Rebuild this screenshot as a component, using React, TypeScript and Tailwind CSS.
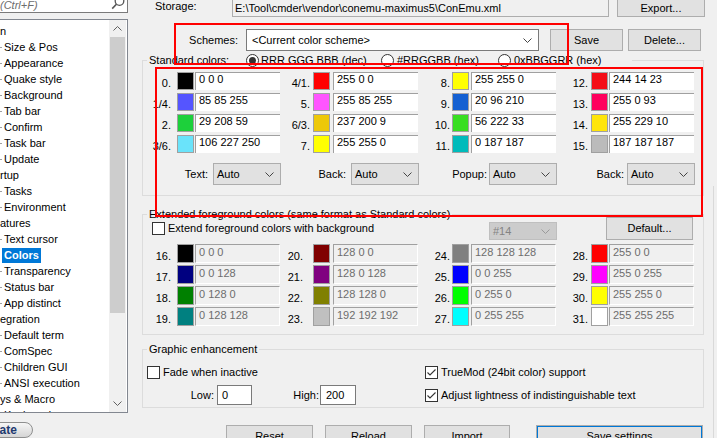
import React from "react";

type Cell = [string, string];

// [label, "r g b"]
const standard: Cell[][] = [
  [["0.", "0 0 0"], ["4/1.", "255 0 0"], ["8.", "255 255 0"], ["12.", "244 14 23"]],
  [["1/4.", "85 85 255"], ["5.", "255 85 255"], ["9.", "20 96 210"], ["13.", "255 0 93"]],
  [["2.", "29 208 59"], ["6/3.", "237 200 9"], ["10.", "56 222 33"], ["14.", "255 229 10"]],
  [["3/6.", "106 227 250"], ["7.", "255 255 0"], ["11.", "0 187 187"], ["15.", "187 187 187"]],
];

const extended: Cell[][] = [
  [["16.", "0 0 0"], ["20.", "128 0 0"], ["24.", "128 128 128"], ["28.", "255 0 0"]],
  [["17.", "0 0 128"], ["21.", "128 0 128"], ["25.", "0 0 255"], ["29.", "255 0 255"]],
  [["18.", "0 128 0"], ["22.", "128 128 0"], ["26.", "0 255 0"], ["30.", "255 255 0"]],
  [["19.", "0 128 128"], ["23.", "192 192 192"], ["27.", "0 255 255"], ["31.", "255 255 255"]],
];

const cols = [
  { label: "w-[28px]", sw: "ml-[6px]", inp: "ml-[1px]" },
  { label: "w-[30px]", sw: "ml-[3px]", inp: "ml-[3px]" },
  { label: "w-[32px]", sw: "ml-[2px]", inp: "ml-[2px]" },
  { label: "w-[32px]", sw: "ml-[3px]", inp: "ml-[1px]" },
];

// visible parts of the settings tree (it is scrolled to the right a bit)
const tree: { text: string; child?: boolean; selected?: boolean }[] = [
  { text: "n" },
  { text: "Size & Pos", child: true },
  { text: "Appearance", child: true },
  { text: "Quake style", child: true },
  { text: "Background", child: true },
  { text: "Tab bar", child: true },
  { text: "Confirm", child: true },
  { text: "Task bar", child: true },
  { text: "Update", child: true },
  { text: "rtup" },
  { text: "Tasks", child: true },
  { text: "Environment", child: true },
  { text: "atures" },
  { text: "Text cursor", child: true },
  { text: "Colors", child: true, selected: true },
  { text: "Transparency", child: true },
  { text: "Status bar", child: true },
  { text: "App distinct", child: true },
  { text: "egration" },
  { text: "Default term", child: true },
  { text: "ComSpec", child: true },
  { text: "Children GUI", child: true },
  { text: "ANSI execution", child: true },
  { text: "ys & Macro" },
  { text: "Keyboard", child: true },
];

function Chevron({ up = false, color = "#444" }: { up?: boolean; color?: string }) {
  return (
    <svg width="9" height="5" viewBox="0 0 9 5">
      <path d={up ? "M0.5 4.5L4.5 0.5L8.5 4.5" : "M0.5 0.5L4.5 4.5L8.5 0.5"} fill="none" stroke={color} strokeWidth="1" />
    </svg>
  );
}

function Button({ className = "", children }: { className?: string; children: React.ReactNode }) {
  return (
    <div className={`flex h-full items-center justify-center border border-[#adadad] bg-[#e1e1e1] ${className}`}>
      {children}
    </div>
  );
}

function Combo({ className = "", text }: { className?: string; text: string }) {
  return (
    <div className={`flex h-[22px] w-[68px] items-center border border-[#adadad] bg-[#e1e1e1] pl-[3px] pt-px ${className}`}>
      <span>{text}</span>
      <span className="ml-auto mr-[6px] flex">
        <Chevron />
      </span>
    </div>
  );
}

function Checkbox({ checked = false }: { checked?: boolean }) {
  return (
    <div className="flex h-[13px] w-[13px] shrink-0 items-center justify-center border border-[#333] bg-white">
      {checked && (
        <svg width="11" height="11" viewBox="0 0 11 11">
          <path d="M1.5 5.5L4 8L9.5 2.5" fill="none" stroke="#333" strokeWidth="1.1" />
        </svg>
      )}
    </div>
  );
}

function Radio({ checked = false }: { checked?: boolean }) {
  return (
    <div className="flex h-[13px] w-[13px] shrink-0 items-center justify-center rounded-full border border-[#333] bg-white">
      {checked && <div className="h-[7px] w-[7px] rounded-full bg-[#333]" />}
    </div>
  );
}

function ColorRow({ cells, disabled }: { cells: Cell[]; disabled?: boolean }) {
  return (
    <div className={`flex ${disabled ? "h-[19px]" : "h-[18px]"}`}>
      {cells.map(([label, rgb], i) => (
        <React.Fragment key={label}>
          <div
            className={`${cols[i].label} h-full text-right ${disabled ? "pt-[6px]" : "pt-[5px]"} ${
              disabled && i === 1 ? "pr-[7px]" : ""
            }`}
          >
            {label}
          </div>
          <div
            className={`${cols[i].sw} h-full w-[17px] border border-[#a0a0a0]`}
            style={{ backgroundColor: `rgb(${rgb.split(" ").join(",")})` }}
          />
          <div
            className={`${cols[i].inp} h-full w-[85px] border-t border-l border-[#a0a0a0] pl-[3px] ${
              disabled ? "border-r border-b border-r-white border-b-white bg-[#f0f0f0] leading-[15px] text-[#6d6d6d]" : "bg-white"
            }`}
          >
            {rgb}
          </div>
        </React.Fragment>
      ))}
    </div>
  );
}

export default function App() {
  return (
    <div className="relative flex h-[438px] w-[717px] overflow-hidden bg-[#f0f0f0] font-['Liberation_Sans',Arial,sans-serif] text-[11px] leading-[13px] text-black">
      {/* left: search + tree */}
      <div className="flex w-[128px] shrink-0 flex-col">
        <div className="flex h-[16px] items-start border-r border-b border-[#7a7a7a] bg-white">
          <span className="mt-[-1px] italic text-[#6d6d6d]">(Ctrl+F)</span>
          <svg className="ml-auto mr-[2px] mt-[-5px]" width="14" height="17" viewBox="0 0 14 17">
            <circle cx="8.5" cy="6" r="4.3" fill="none" stroke="#555" strokeWidth="1.3" />
            <path d="M5.4 9.2L1.2 13.6" stroke="#555" strokeWidth="1.6" />
          </svg>
        </div>
        <div className="mt-[6px] flex h-[394px] border-t border-r border-b border-[#828790] bg-white">
          <div className="flex-1 overflow-hidden pt-[3px]">
            {tree.map((t) => (
              <div key={t.text} className="flex h-[16px] items-center whitespace-nowrap">
                {t.child && !t.selected && <span className="mr-[2px] h-px w-[2px] bg-[#a0a0a0]" />}
                {t.selected ? (
                  <span className="ml-[2px] bg-[#0078d7] px-[2px] py-px font-bold text-white">{t.text}</span>
                ) : (
                  <span>{t.text}</span>
                )}
              </div>
            ))}
          </div>
          <div className="mr-px flex w-[17px] flex-col bg-[#f0f0f0]">
            <div className="flex h-[17px] items-center justify-center">
              <Chevron up color="#606060" />
            </div>
            <div className="flex-1 px-px">
              <div className="h-[276px] bg-[#cdcdcd]" />
            </div>
            <div className="flex h-[17px] items-center justify-center">
              <Chevron color="#606060" />
            </div>
          </div>
        </div>
        <div className="ml-[-40px] mt-[9px] flex h-[22px] w-[73px] items-center justify-center rounded-[11px] border border-[#8e8f8f] bg-linear-to-b from-[#f6f6f6] to-[#d5d5d5] text-[12px] font-bold text-[#1e3a70]">
          Donate
        </div>
      </div>

      {/* right: colors page */}
      <div className="flex flex-1 flex-col">
        <div className="mt-[-4px] flex h-[21px] shrink-0 items-center">
          <div className="ml-[27px] w-[77px]">Storage:</div>
          <div className="flex h-full w-[377px] items-center border border-[#adadad] pl-[2px] pt-[3px]">
            E:\Tool\cmder\vendor\conemu-maximus5\ConEmu.xml
          </div>
          <Button className="ml-[8px] w-[88px] pt-[3px]">Export...</Button>
        </div>

        <div className="mt-[12px] flex h-[22px] shrink-0 items-center">
          <div className="w-[110px] text-right">Schemes:</div>
          <div className="ml-[8px] flex h-full w-[293px] items-center border border-[#7a7a7a] bg-white pl-[5px]">
            <span>{"<Current color scheme>"}</span>
            <span className="ml-auto mr-[6px] flex">
              <Chevron />
            </span>
          </div>
          <Button className="ml-[11px] w-[73px]">Save</Button>
          <Button className="ml-[5px] w-[73px]">Delete...</Button>
        </div>

        <fieldset className="ml-[14px] mt-[1px] w-[562px] shrink-0 border border-[#dcdcdc] pb-[10px] pt-[4px]">
          <legend className="ml-[4px] px-[2px]">
            <div className="flex h-[16px] items-center">
              <span className="w-[97px]">Standard colors:</span>
              <span className="flex w-[135px] items-center">
                <Radio checked />
                <span className="ml-[2px]">RRR GGG BBB (dec)</span>
              </span>
              <span className="flex w-[117px] items-center">
                <Radio />
                <span className="ml-[3px]">#RRGGBB (hex)</span>
              </span>
              <span className="flex w-[132px] items-center">
                <Radio />
                <span className="ml-[3px]">0xBBGGRR (hex)</span>
              </span>
            </div>
          </legend>
          <div className="flex flex-col gap-[3px]">
            {standard.map((row, i) => (
              <ColorRow key={i} cells={row} />
            ))}
          </div>
          <div className="mt-[10px] flex h-[22px] items-center">
            <div className="w-[65px] text-right">Text:</div>
            <Combo className="ml-[5px]" text="Auto" />
            <div className="w-[65px] text-right">Back:</div>
            <Combo className="ml-[5px]" text="Auto" />
            <div className="w-[68px] text-right">Popup:</div>
            <Combo className="ml-[2px]" text="Auto" />
            <div className="w-[67px] text-right">Back:</div>
            <Combo className="ml-[3px]" text="Auto" />
          </div>
        </fieldset>

        <fieldset className="ml-[14px] mt-[10px] w-[562px] shrink-0 border border-[#dcdcdc] pb-[8px]">
          <legend className="ml-[4px] px-[2px] leading-[16px]">
            Extended foreground colors (same format as Standard colors)
          </legend>
          <div className="mt-[-5px] flex h-[23px] items-center">
            <div className="flex w-[346px] items-center">
              <span className="ml-[9px]">
                <Checkbox />
              </span>
              <span className="ml-[3px]">Extend foreground colors with background</span>
            </div>
            <div className="flex h-[18px] w-[68px] items-center self-end border border-[#bfbfbf] bg-[#cccccc] pl-[3px] text-[#838383]">
              <span>#14</span>
              <span className="ml-auto mr-[6px] flex">
                <Chevron color="#9a9a9a" />
              </span>
            </div>
            <Button className="ml-[49px] w-[87px]">Default...</Button>
          </div>
          <div className="mt-[4px] flex flex-col gap-[2px]">
            {extended.map((row, i) => (
              <ColorRow key={i} cells={row} disabled />
            ))}
          </div>
        </fieldset>

        <fieldset className="ml-[14px] mt-[6px] w-[562px] shrink-0 border border-[#dcdcdc] pb-[2px] pt-[7px]">
          <legend className="ml-[4px] px-[2px] leading-[16px]">Graphic enhancement</legend>
          <div className="flex h-[16px] items-center">
            <div className="flex w-[282px] items-center">
              <span className="ml-[4px]">
                <Checkbox />
              </span>
              <span className="ml-[3px]">Fade when inactive</span>
            </div>
            <Checkbox checked />
            <span className="ml-[3px]">TrueMod (24bit color) support</span>
          </div>
          <div className="mt-[5px] flex h-[20px] items-center">
            <div className="flex h-full w-[282px] items-center">
              <div className="w-[71px] text-right">Low:</div>
              <div className="ml-[3px] flex h-full w-[35px] items-center border border-[#7a7a7a] bg-white pl-[4px]">0</div>
              <div className="w-[67px] text-right">High:</div>
              <div className="ml-px flex h-full w-[36px] items-center border border-[#7a7a7a] bg-white pl-[5px]">200</div>
            </div>
            <Checkbox checked />
            <span className="ml-[3px]">Adjust lightness of indistinguishable text</span>
          </div>
        </fieldset>

        <div className="mt-[17px] flex h-[23px] shrink-0">
          <Button className="ml-[98px] w-[87px]">Reset</Button>
          <Button className="ml-[12px] w-[87px]">Reload</Button>
          <Button className="ml-[12px] w-[86px]">Import</Button>
          <Button className="ml-[26px] w-[167px] border-[#0078d7] shadow-[inset_0_0_0_1px_#0078d7]">Save settings</Button>
        </div>
      </div>

      {/* edge of the page's scroll area */}
      <div className="pointer-events-none absolute left-[713px] top-[186px] h-[252px] w-px bg-[#d9d9d9]" />

      {/* red annotation frames drawn over the dialog */}
      <div className="pointer-events-none absolute left-[174px] top-[23px] h-[42px] w-[395px] border-2 border-[#ff0000]" />
      <div className="pointer-events-none absolute left-[155px] top-[67px] h-[150px] w-[548px] border-2 border-[#ff0000]" />
    </div>
  );
}
